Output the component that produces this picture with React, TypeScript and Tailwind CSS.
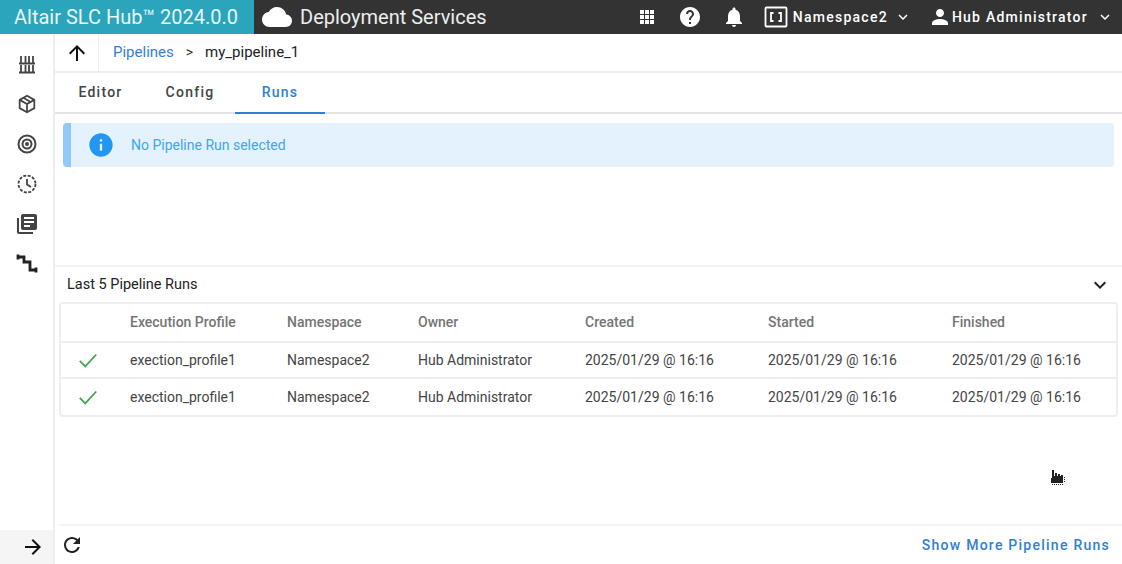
import type { ReactNode } from 'react';

const runs = [
  { profile: 'exection_profile1', namespace: 'Namespace2', owner: 'Hub Administrator', created: '2025/01/29 @ 16:16', started: '2025/01/29 @ 16:16', finished: '2025/01/29 @ 16:16' },
  { profile: 'exection_profile1', namespace: 'Namespace2', owner: 'Hub Administrator', created: '2025/01/29 @ 16:16', started: '2025/01/29 @ 16:16', finished: '2025/01/29 @ 16:16' },
];

const rowGrid = 'grid grid-cols-[69px_157px_131px_167px_183px_184px_1fr] items-center';

function Icon({ d, className }: { d: string; className?: string }) {
  return (
    <svg viewBox="0 0 24 24" fill="currentColor" className={className}>
      <path d={d} />
    </svg>
  );
}

function SideItem({ children }: { children: ReactNode }) {
  return <div className="flex h-10 items-center justify-center text-[#444]">{children}</div>;
}

const chevron = 'M16.59 8.59L12 13.17 7.41 8.59 6 10l6 6 6-6z';

export default function App() {
  return (
    <div className="relative flex h-[564px] w-[1122px] flex-col overflow-hidden bg-white font-['Roboto',sans-serif] text-[14px] text-[#333]">
      {/* Top bar */}
      <header className="flex h-[34px] shrink-0 items-center bg-[#333] text-white">
        <div className="flex h-full w-[254px] items-center bg-[#2ba5bb] pl-[14px] text-[20px] text-[#e8f6f8]">Altair SLC Hub™ 2024.0.0</div>
        <Icon className="ml-[8px] h-[30px] w-[30px]" d="M19.35 10.04C18.67 6.59 15.64 4 12 4 9.11 4 6.6 5.64 5.35 8.04 2.34 8.36 0 10.91 0 14c0 3.31 2.69 6 6 6h13c2.76 0 5-2.24 5-5 0-2.64-2.05-4.78-4.65-4.96z" />
        <div className="ml-[8px] text-[20px] text-[#eee]">Deployment Services</div>
        <div className="ml-auto flex items-center">
          <Icon className="h-6 w-6" d="M5 5h4v4H5V5zm5 0h4v4h-4V5zm5 0h4v4h-4V5zM5 10h4v4H5v-4zm5 0h4v4h-4v-4zm5 0h4v4h-4v-4zM5 15h4v4H5v-4zm5 0h4v4h-4v-4zm5 0h4v4h-4v-4z" />
          <Icon className="ml-[19px] h-6 w-6" d="M12 2C6.48 2 2 6.48 2 12s4.48 10 10 10 10-4.48 10-10S17.52 2 12 2zm1 17h-2v-2h2v2zm2.07-7.75l-.9.92C13.45 12.9 13 13.5 13 15h-2v-.5c0-1.1.45-2.1 1.17-2.83l1.24-1.26c.37-.36.59-.86.59-1.41 0-1.1-.9-2-2-2s-2 .9-2 2H8c0-2.21 1.79-4 4-4s4 1.79 4 4c0 .88-.36 1.68-.93 2.25z" />
          <Icon className="ml-[20px] h-6 w-6" d="M12 22c1.1 0 2-.9 2-2h-4c0 1.1.89 2 2 2zm6-6v-5c0-3.07-1.64-5.64-4.5-6.32V4c0-.83-.67-1.5-1.5-1.5s-1.5.67-1.5 1.5v.68C7.63 5.36 6 7.92 6 11v5l-2 2v1h16v-1l-2-2z" />
          <svg viewBox="0 0 24 24" fill="none" stroke="currentColor" className="ml-[18px] h-[24px] w-[24px]">
            <rect x="1.5" y="2.5" width="21" height="19" rx="1" strokeWidth="1.8" />
            <path d="M9.5 8H7v8h2.5M14.5 8H17v8h-2.5" strokeWidth="1.8" />
          </svg>
          <span className="ml-[5px] text-[14px] font-medium tracking-[1.25px]">Namespace2</span>
          <Icon className="ml-[6px] h-[18px] w-[18px]" d={chevron} />
          <Icon className="ml-[16px] h-6 w-6" d="M12 12c2.21 0 4-1.79 4-4s-1.79-4-4-4-4 1.79-4 4 1.79 4 4 4zm0 2c-2.67 0-8 1.34-8 4v2h16v-2c0-2.66-5.33-4-8-4z" />
          <span className="text-[14px] font-medium tracking-[1.25px]">Hub Administrator</span>
          <Icon className="ml-[8px] mr-[8px] h-[18px] w-[18px]" d={chevron} />
        </div>
      </header>

      <div className="flex min-h-0 flex-1">
        {/* Side nav */}
        <aside className="flex w-[55px] shrink-0 flex-col border-r-2 border-[#eee]">
          <div className="flex flex-col pt-[10px]">
            <SideItem>
              <svg viewBox="0 0 24 24" fill="none" stroke="currentColor" strokeWidth="1.8" className="h-6 w-6">
                <path d="M4 11.5h16M4 20.5h16M6 4v7M10.500 4v7M14 4v7M18 4v7M6 13v7M10.500 13v7M14 13v7M18 13v7" />
              </svg>
            </SideItem>
            <SideItem>
              <svg viewBox="0 0 24 24" fill="none" stroke="currentColor" strokeWidth="1.9" strokeLinejoin="round" className="h-[22px] w-[22px]">
                <path d="M12 3l8 4.500v9L12 21l-8-4.500v-9L12 3z" />
                <path d="M4 7.500l8 4.500 8-4.500M12 12v9M8 5.300l8 4.500" />
              </svg>
            </SideItem>
            <SideItem>
              <svg viewBox="0 0 24 24" fill="none" stroke="currentColor" strokeWidth="2" className="h-6 w-6">
                <circle cx="12" cy="12" r="8.500" />
                <circle cx="12" cy="12" r="4.500" />
                <circle cx="12" cy="12" r="1" />
              </svg>
            </SideItem>
            <SideItem>
              <svg viewBox="0 0 24 24" fill="none" stroke="currentColor" strokeWidth="1.8" className="h-6 w-6">
                <circle cx="12" cy="12" r="8.500" strokeDasharray="3 1.500" />
                <path d="M12 7v5.500l4 2.500" />
              </svg>
            </SideItem>
            <SideItem>
              <Icon className="h-6 w-6" d="M4 6H2v14c0 1.100.9 2 2 2h14v-2H4V6zm16-4H8c-1.100 0-2 .9-2 2v12c0 1.100.9 2 2 2h12c1.100 0 2-.9 2-2V4c0-1.100-.9-2-2-2zm-1 9H9V9h10v2zm-4 4H9v-2h6v2zm4-8H9V5h10v2z" />
            </SideItem>
            <SideItem>
              <svg viewBox="0 0 24 24" fill="none" stroke="#222" strokeWidth="2.800" className="h-6 w-6">
                <path d="M3 5h6v5h6v8h6M3 2.500v5M21 15.500v5" />
              </svg>
            </SideItem>
          </div>
          <div className="mt-auto flex h-[34px] items-center justify-end bg-[#f5f5f5] pr-[8px] text-[#111]">
            <Icon className="h-6 w-6" d="M12 4l-1.410 1.410L16.170 11H4v2h12.170l-5.580 5.590L12 20l8-8z" />
          </div>
        </aside>

        <main className="flex min-w-0 flex-1 flex-col">
          {/* Breadcrumb */}
          <div className="flex h-[39px] shrink-0 items-center border-b-2 border-[#eee]">
            <div className="flex h-full w-[44px] items-center justify-center border-r border-[#eee] text-[#111]">
              <Icon className="h-6 w-6" d="M4 12l1.410 1.410L11 7.830V20h2V7.830l5.580 5.590L20 12l-8-8-8 8z" />
            </div>
            <span className="ml-[14px] text-[15px] text-[#2f7fd6]">Pipelines</span>
            <span className="ml-[12px] text-[14px] text-[#333]">&gt;</span>
            <span className="ml-[12px] text-[15px] text-[#222]">my_pipeline_1</span>
          </div>

          {/* Tabs */}
          <div className="flex h-[41px] shrink-0 border-b-2 border-[#e4e4e4]">
            <div className="flex w-[90px] items-center justify-center pl-[1px] font-medium tracking-[1.25px] text-[#444]">Editor</div>
            <div className="flex w-[90px] items-center justify-center font-medium tracking-[1.25px] text-[#444]">Config</div>
            <div className="relative flex w-[90px] items-center justify-center font-medium tracking-[1.25px] text-[#2f7fd6]">
              Runs
              <div className="absolute bottom-[-2px] left-0 h-[2px] w-full bg-[#2f7fd6]" />
            </div>
          </div>

          {/* Info alert */}
          <div className="ml-[8px] mr-[8px] mt-[9px] flex h-[44px] shrink-0 items-center rounded-[4px] border-l-[8px] border-[#90caf9] bg-[#e3f2fd]">
            <Icon className="ml-[16px] h-[28px] w-[28px] text-[#2196f3]" d="M12 2C6.480 2 2 6.480 2 12s4.480 10 10 10 10-4.480 10-10S17.520 2 12 2zm1 15h-2v-6h2v6zm0-8h-2V7h2v2z" />
            <span className="ml-[16px] text-[#42a5f5]">No Pipeline Run selected</span>
          </div>

          {/* Last runs */}
          <div className="mt-[98px] flex h-[37px] shrink-0 items-center border-t-2 border-[#f3f3f3] pl-[12px] pr-[10px] text-[14.500px] text-[#222]">
            Last 5 Pipeline Runs
            <Icon className="ml-auto h-6 w-6 text-[#222]" d={chevron} />
          </div>
          <div className="ml-[4px] mr-[4px] rounded-[4px] border-2 border-[#eee] text-[#444]">
            <div className={`${rowGrid} h-[39px] border-b-2 border-[#eee] font-medium text-[#757575]`}>
              <span />
              <span>Execution Profile</span>
              <span>Namespace</span>
              <span>Owner</span>
              <span>Created</span>
              <span>Started</span>
              <span>Finished</span>
            </div>
            {runs.map((run, i) => (
              <div key={i} className={`${rowGrid} h-[36px] ${i === 0 ? 'border-b-2 border-[#eee]' : ''}`}>
                <span className="pl-[16px]">
                  <svg viewBox="0 0 24 24" fill="none" stroke="#43a853" strokeWidth="2" className="h-[22px] w-[22px]">
                    <path d="M3 13l6 6L21 6" />
                  </svg>
                </span>
                <span>{run.profile}</span>
                <span>{run.namespace}</span>
                <span>{run.owner}</span>
                <span>{run.created}</span>
                <span>{run.started}</span>
                <span>{run.finished}</span>
              </div>
            ))}
          </div>

          {/* Footer */}
          <div className="ml-[4px] mt-auto flex h-[40px] shrink-0 items-center border-t-2 border-[#f3f3f3] pr-[12px]">
            <Icon className="ml-[1px] h-6 w-6 text-[#222]" d="M17.650 6.350C16.200 4.900 14.210 4 12 4c-4.420 0-7.990 3.580-7.990 8s3.570 8 7.990 8c3.730 0 6.840-2.550 7.730-6h-2.080c-.82 2.330-3.040 4-5.650 4-3.310 0-6-2.690-6-6s2.690-6 6-6c1.660 0 3.140.69 4.220 1.780L13 11h7V4l-2.350 2.350z" />
            <span className="ml-auto font-medium tracking-[1.25px] text-[#2f7fd6]">Show More Pipeline Runs</span>
          </div>
        </main>
      </div>

      {/* Screen-capture mouse pointer */}
      <svg viewBox="0 0 16 18" className="absolute left-[1050px] top-[468px] h-[18px] w-[16px]">
        <path d="M2 2h2v6h1V5h2v3h1V6h2v2h1V7h2v8H1V10h1V2z" fill="#222" />
        <path d="M2 16.500h11M14.500 9v6" stroke="#222" strokeWidth="1" strokeDasharray="1 1" fill="none" />
      </svg>
    </div>
  );
}
